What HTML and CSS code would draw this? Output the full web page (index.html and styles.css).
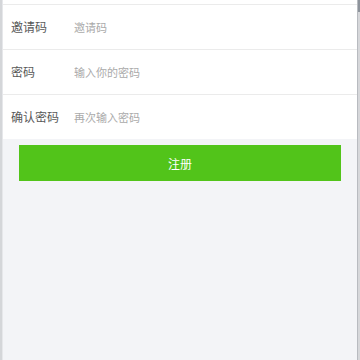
FILE: index.html
```html
<!DOCTYPE html>
<html lang="zh">
<head>
<meta charset="utf-8">
<link rel="stylesheet" href="styles.css">
</head>
<body>
<div class="edge-left"></div>
<main class="main">
  <div class="form">
    <div class="row"><span class="label">邀请码</span><input class="field" type="text" placeholder="邀请码"></div>
    <div class="row"><span class="label">密码</span><input class="field" type="password" placeholder="输入你的密码"></div>
    <div class="row"><span class="label">确认密码</span><input class="field" type="password" placeholder="再次输入密码"></div>
  </div>
  <button class="submit" type="button">注册</button>
</main>
<div class="edge-right"><div class="thumb"></div></div>
</body>
</html>
```
FILE: styles.css
```css
html, body {
  margin: 0;
  height: 100%;
}
body {
  display: flex;
  font-family: "Noto Sans CJK SC", "Noto Sans", sans-serif;
  background: #f3f4f7;
}
.edge-left {
  width: 3px;
  background: #d4d6d9;
  border-right: 1px solid #e6e7ea;
  box-sizing: border-box;
}
.edge-right {
  width: 3px;
  background: #d6d7da;
  border-left: 1px solid #b8bbc0;
  box-sizing: border-box;
}
.thumb {
  height: 12px;
  background: #8d939b;
}
.main {
  flex: 1;
  display: flex;
  flex-direction: column;
  background: #f3f4f7;
}
.form {
  background: #fff;
  padding-top: 4px;
}
.row {
  display: flex;
  align-items: center;
  height: 44px;
  border-top: 1px solid #ebebeb;
  padding-left: 8px;
}
.label {
  width: 63px;
  font-size: 12px;
  color: #585858;
  margin-top: -1px;
}
.field {
  flex: 1;
  border: none;
  outline: none;
  padding: 0;
  font-family: inherit;
  font-size: 11px;
  color: #333;
  background: transparent;
  margin-top: -1px;
}
.field::placeholder {
  color: #aaaaaa;
}
.submit {
  margin: 6px 16px 0;
  height: 36px;
  border: none;
  background: #52c41a;
  color: #fff;
  font-family: inherit;
  font-size: 12px;
  padding: 0;
}
```
